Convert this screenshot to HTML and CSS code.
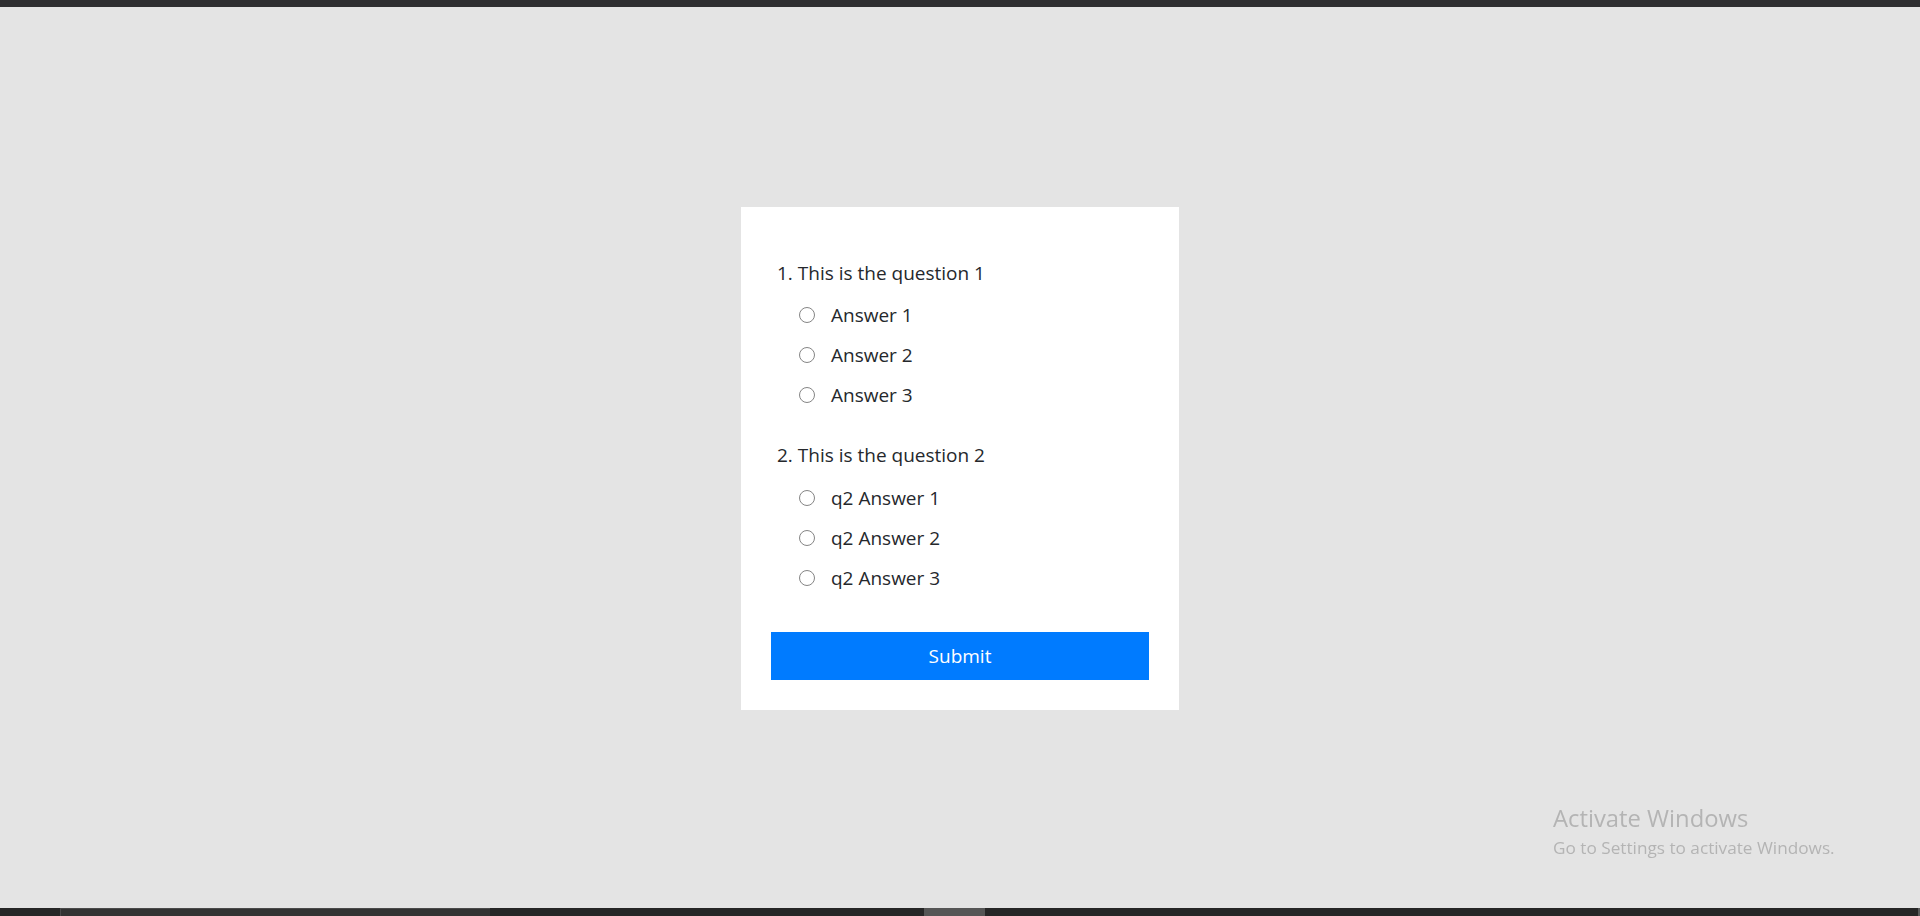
FILE: index.html
```html
<!DOCTYPE html>
<html lang="en">
<head>
<meta charset="utf-8">
<title>Quiz</title>
<link rel="stylesheet" href="styles.css">
</head>
<body>
<div class="top-bar"></div>
<main class="stage">
  <form class="quiz-card" onsubmit="return false;">
    <div class="question">
      <p class="question-title">1. This is the question 1</p>
      <ul class="answers">
        <li><label class="answer"><input class="radio" type="radio" name="q1"><span>Answer 1</span></label></li>
        <li><label class="answer"><input class="radio" type="radio" name="q1"><span>Answer 2</span></label></li>
        <li><label class="answer"><input class="radio" type="radio" name="q1"><span>Answer 3</span></label></li>
      </ul>
    </div>
    <div class="question question-next">
      <p class="question-title">2. This is the question 2</p>
      <ul class="answers">
        <li><label class="answer"><input class="radio" type="radio" name="q2"><span>q2 Answer 1</span></label></li>
        <li><label class="answer"><input class="radio" type="radio" name="q2"><span>q2 Answer 2</span></label></li>
        <li><label class="answer"><input class="radio" type="radio" name="q2"><span>q2 Answer 3</span></label></li>
      </ul>
    </div>
    <button class="submit" type="submit">Submit</button>
  </form>
</main>
<footer class="taskbar">
  <div class="tb-seg tb-start"></div>
  <div class="tb-seg tb-search"></div>
  <div class="tb-seg tb-gap"></div>
  <div class="tb-seg tb-active"></div>
  <div class="tb-seg tb-rest"></div>
  <div class="tb-seg tb-edge"></div>
</footer>
<div class="watermark">
  <div class="wm-title">Activate Windows</div>
  <div class="wm-sub">Go to Settings to activate Windows.</div>
</div>
</body>
</html>
```

FILE: styles.css
```css
* { box-sizing: border-box; }

html, body {
  margin: 0;
  padding: 0;
  height: 916px;
  overflow: hidden;
}

body {
  display: flex;
  flex-direction: column;
  background: #e4e4e4;
  font-family: "Open Sans", "Noto Sans", "Liberation Sans", sans-serif;
  color: #25282c;
}

.top-bar {
  height: 7px;
  flex: none;
  background: #2f2f31;
}

.stage {
  flex: 1;
  display: flex;
  align-items: center;
  justify-content: center;
  padding-top: 2px;
}

.quiz-card {
  width: 438px;
  background: #ffffff;
  padding: 30px;
}

.question-title {
  margin: 21px 0 0 0;
  padding-left: 6px;
  font-size: 19px;
  line-height: 30px;
}

.answers {
  list-style: none;
  margin: 7px 0 0 0;
  padding: 0;
}

.question-next { margin-top: 25px; }
.question-next .question-title { margin-top: 0; }
.question-next .answers { margin-top: 8px; }

.answer {
  display: flex;
  align-items: center;
  height: 40px;
  padding-left: 28px;
  font-size: 19px;
  line-height: 30px;
  cursor: pointer;
}

.radio {
  appearance: none;
  -webkit-appearance: none;
  width: 16px;
  height: 16px;
  margin: 0 16px 1px 0;
  border: 1px solid #858585;
  border-radius: 50%;
  background: #fff;
  flex: none;
}

.radio:checked {
  background: radial-gradient(circle, #0075ff 0 4px, #fff 4.5px);
  border-color: #0075ff;
}

.submit {
  display: block;
  width: 100%;
  height: 48px;
  margin-top: 34px;
  border: none;
  border-radius: 0;
  background: #007bff;
  color: #ffffff;
  font-family: inherit;
  font-size: 19px;
  line-height: 30px;
  cursor: pointer;
}

.taskbar {
  height: 8px;
  flex: none;
  display: flex;
  background: #262626;
}

.tb-seg { height: 100%; }
.tb-start { width: 60px; background: #262626; }
.tb-search { width: 430px; background: #333333; border-left: 1px solid #4a4a4a; border-top: 1px solid #4a4a4a; }
.tb-gap { width: 434px; background: #262626; }
.tb-active { width: 61px; background: #555555; }
.tb-rest { flex: 1; background: #262626; }
.tb-edge { width: 2px; background: #5a5a5a; }

.watermark {
  position: fixed;
  left: 1553px;
  top: 802px;
  color: #b4b4b4;
  pointer-events: none;
}

.wm-title {
  font-size: 23.8px;
  line-height: 32px;
}

.wm-sub {
  font-size: 17.2px;
  line-height: 22px;
  margin-top: 3px;
}
```
